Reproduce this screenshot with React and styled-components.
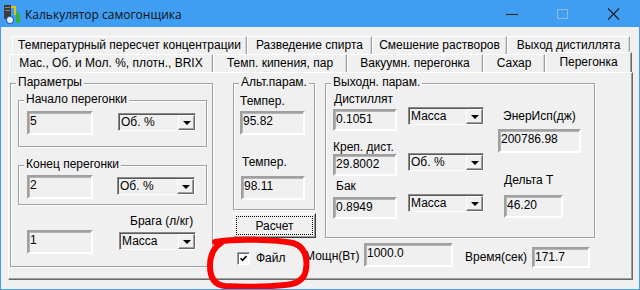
import React from "react";
import styled, { createGlobalStyle } from "styled-components";

const BLUE = "#409ef2";
const FACE = "#f0f0f0";

const GlobalStyle = createGlobalStyle`
  *, *::before, *::after { box-sizing: border-box; }
  html, body { margin: 0; padding: 0; background: ${FACE}; }
  body {
    font-family: "Liberation Sans", Arial, sans-serif;
    font-size: 12px;
    color: #000;
  }
`;

const Window = styled.div`
  position: relative;
  width: 640px;
  height: 290px;
  display: flex;
  flex-direction: column;
  border: 1px solid ${BLUE};
  border-top: none;
  overflow: hidden;
`;

const TitleBar = styled.header`
  flex: none;
  height: 27px;
  display: flex;
  align-items: center;
  background: ${BLUE};
  padding-left: 2px;
`;

const TitleText = styled.span`
  align-self: flex-start;
  margin-left: 4px;
  padding-top: 7px;
  font-family: "Open Sans", "Noto Sans", sans-serif;
  font-size: 12px;
  line-height: 16px;
  color: #111;
`;

const CaptionButtons = styled.div`
  margin-left: auto;
  display: flex;
  height: 100%;
`;

const CaptionButton = styled.div`
  width: 51px;
  height: 27px;
  display: flex;
  align-items: center;
  justify-content: center;
`;

const Body = styled.main`
  flex: 1;
  display: flex;
  flex-direction: column;
  align-items: flex-start;
  padding: 9px 0 0 7px;
  background: ${FACE};
`;

const TabRow = styled.div`
  display: flex;
  align-items: flex-end;
  margin-left: ${(p) => p.$indent}px;
  height: ${(p) => p.$h}px;
  margin-bottom: ${(p) => p.$mb || 0}px;
`;

const Tab = styled.div`
  flex: none;
  width: ${(p) => p.$w}px;
  height: ${(p) => (p.$selected ? 20 : 18)}px;
  padding-top: ${(p) => (p.$selected ? 2 : 1)}px;
  line-height: 14px;
  text-align: center;
  white-space: nowrap;
  border-top: 1px solid #fff;
  border-left: 1px solid #fff;
  border-right: 1px solid ${(p) => (p.$selected ? "#696969" : "#a0a0a0")};
  box-shadow: ${(p) => (p.$selected ? "inset -1px 0 0 #a0a0a0" : "inset -1px 0 0 #d6d6d6")};
  background: ${FACE};
`;

const Panel = styled.section`
  width: 625px;
  height: 208px;
  display: flex;
  align-items: flex-start;
  padding: 2px 0 0 1px;
  border-top: 1px solid #fff;
  border-left: 1px solid #fff;
  border-right: 1px solid #696969;
  border-bottom: 1px solid #696969;
  box-shadow: inset -1px -1px 0 #a0a0a0;
`;

const Fieldset = styled.fieldset`
  flex: none;
  margin: ${(p) => p.$mt || 0}px 0 0 ${(p) => p.$ml || 0}px;
  padding: 0;
  min-width: 0;
  width: ${(p) => p.$w}px;
  height: ${(p) => p.$h}px;
  border: 1px solid #a0a0a0;
  box-shadow: inset 1px 1px 0 #fff, 1px 1px 0 #fff;
`;

const Legend = styled.legend`
  margin-left: 5px;
  padding: 0 2px 3px;
  line-height: 14px;
  background: ${FACE};
  white-space: nowrap;
`;

const GroupBox = ({ title, w, h, mt, ml, children }) => (
  <Fieldset $w={w} $h={h} $mt={mt} $ml={ml}>
    <Legend>{title}</Legend>
    {children}
  </Fieldset>
);

const ParamsBody = styled.div`
  display: flex;
  flex-direction: column;
  padding: 0 5px 0 7px;
`;

const RangeBody = styled.div`
  display: flex;
  align-items: flex-start;
  padding-left: ${(p) => p.$pl}px;
`;

const MashRow = styled.div`
  display: flex;
  align-items: flex-start;
  padding-left: 9px;
`;

const Stack = styled.div`
  flex: none;
  display: flex;
  flex-direction: column;
  align-items: flex-start;
  width: ${(p) => (p.$w ? `${p.$w}px` : "auto")};
  margin-left: ${(p) => p.$ml || 0}px;
  margin-top: ${(p) => p.$mt || 0}px;
  padding-left: ${(p) => p.$pl || 0}px;
`;

const RightArea = styled.div`
  display: flex;
  flex-direction: column;
  margin-left: 20px;
`;

const TopRow = styled.div`
  display: flex;
  align-items: flex-start;
`;

const OutBody = styled.div`
  display: flex;
  align-items: flex-start;
  padding-left: 7px;
`;

const BottomRow = styled.div`
  display: flex;
  align-items: flex-start;
`;

const Label = styled.div`
  flex: none;
  line-height: 14px;
  white-space: nowrap;
  margin-top: ${(p) => p.$mt || 0}px;
  margin-left: ${(p) => p.$ml || 0}px;
  width: ${(p) => (p.$w ? `${p.$w}px` : "auto")};
`;

const Edit = styled.div`
  flex: none;
  width: ${(p) => p.$w}px;
  height: ${(p) => p.$h || 24}px;
  margin-top: ${(p) => p.$mt || 0}px;
  margin-left: ${(p) => p.$ml || 0}px;
  padding: 1px 1px 0;
  line-height: 14px;
  white-space: nowrap;
  overflow: hidden;
  background: ${FACE};
  border: 2px solid;
  border-color: #a0a0a0 #fff #fff #a0a0a0;
  box-shadow: inset 1px 1px 0 #b4b4b4;
`;

const ComboBox = styled.div`
  flex: none;
  display: flex;
  width: ${(p) => p.$w}px;
  height: 18px;
  margin-top: ${(p) => p.$mt || 0}px;
  margin-left: ${(p) => p.$ml || 0}px;
  background: ${FACE};
  border: 1px solid;
  border-color: #8a8a8a #fff #fff #8a8a8a;
  box-shadow: inset 1px 1px 0 #5a5a5a;
`;

const ComboValue = styled.div`
  flex: 1;
  padding: 1px 0 0 2px;
  line-height: 14px;
  white-space: nowrap;
`;

const DropButton = styled.div`
  flex: none;
  width: 17px;
  margin: 1px 0 0;
  display: flex;
  align-items: center;
  justify-content: center;
  border-top: 1px solid #fff;
  border-left: 1px solid #fff;
  border-right: 1px solid #696969;
  border-bottom: 1px solid #696969;
  box-shadow: inset -1px -1px 0 #a0a0a0;
  background: ${FACE};
`;

const Arrow = styled.span`
  width: 0;
  height: 0;
  border-left: 4px solid transparent;
  border-right: 4px solid transparent;
  border-top: 4px solid #000;
`;

const Combo = ({ value, w, mt, ml }) => (
  <ComboBox $w={w} $mt={mt} $ml={ml}>
    <ComboValue>{value}</ComboValue>
    <DropButton>
      <Arrow />
    </DropButton>
  </ComboBox>
);

const PushButton = styled.button`
  flex: none;
  display: flex;
  width: 83px;
  height: 25px;
  margin-top: 3px;
  padding: 2px;
  font: inherit;
  color: #000;
  background: ${FACE};
  border-top: 1px solid #fff;
  border-left: 1px solid #fff;
  border-right: 1px solid #3c3c3c;
  border-bottom: 1px solid #3c3c3c;
  box-shadow: inset -1px -1px 0 #a0a0a0;
`;

const FocusRing = styled.span`
  flex: 1;
  display: flex;
  align-items: center;
  justify-content: center;
  line-height: 14px;
  border: 1px dotted #000;
`;

const CheckField = styled.label`
  flex: none;
  display: flex;
  align-items: flex-start;
  width: 72px;
`;

const CheckBox = styled.span`
  flex: none;
  width: 13px;
  height: 13px;
  margin: 14px 0 0 4px;
  display: flex;
  align-items: center;
  justify-content: center;
  background: #fff;
  border: 1px solid;
  border-color: #a0a0a0 #fff #fff #a0a0a0;
  box-shadow: inset 1px 1px 0 #696969;
`;

const Annotation = styled.svg`
  position: absolute;
  left: 0;
  top: 0;
  pointer-events: none;
`;

const AppIcon = () => (
  <svg width="18" height="20" viewBox="0 0 18 20">
    <rect x="1" y="1" width="7" height="14" fill="#3b3b3b" />
    <rect x="2" y="3" width="5" height="1" fill="#8a8a8a" />
    <rect x="2" y="6" width="5" height="1" fill="#8a8a8a" />
    <rect x="8" y="2" width="5" height="2" fill="#e6c200" />
    <rect x="11" y="2" width="2" height="9" fill="#e6c200" />
    <circle cx="7" cy="16" r="3.5" fill="#eaf4ff" stroke="#2a64c8" strokeWidth="1.2" />
    <rect x="13" y="10" width="4" height="9" fill="#36b336" />
    <rect x="14" y="8" width="2" height="2" fill="#36b336" />
  </svg>
);

const TabsTop = [
  ["Температурный пересчет концентрации", 235],
  ["Разведение спирта", 125],
  ["Смешение растворов", 135],
  ["Выход дистиллята", 123],
];

const TabsBottom = [
  ["Мас., Об. и Мол. %, плотн., BRIX", 204],
  ["Темп. кипения, пар", 134],
  ["Вакуумн. перегонка", 136],
  ["Сахар", 62],
  ["Перегонка", 87, true],
];

export default function App() {
  return (
    <>
      <GlobalStyle />
      <Window>
        <TitleBar>
          <AppIcon />
          <TitleText>Калькулятор самогонщика</TitleText>
          <CaptionButtons>
            <CaptionButton>
              <svg width="12" height="12" viewBox="0 0 12 12">
                <rect x="0" y="6" width="12" height="1" fill="#1e1e1e" />
              </svg>
            </CaptionButton>
            <CaptionButton>
              <svg width="12" height="12" viewBox="0 0 12 12">
                <rect x="0.5" y="1.5" width="10" height="9" fill="none" stroke="#8fbde9" />
              </svg>
            </CaptionButton>
            <CaptionButton>
              <svg width="13" height="12" viewBox="0 0 13 12">
                <path d="M1 0.5 L12 11.5 M12 0.5 L1 11.5" stroke="#1e1e1e" strokeWidth="1.1" />
              </svg>
            </CaptionButton>
          </CaptionButtons>
        </TitleBar>

        <Body>
          <TabRow $indent={4} $h={18} $mb={-2}>
            {TabsTop.map(([t, w]) => (
              <Tab key={t} $w={w}>
                {t}
              </Tab>
            ))}
          </TabRow>
          <TabRow $indent={1} $h={20}>
            {TabsBottom.map(([t, w, sel]) => (
              <Tab key={t} $w={w} $selected={sel}>
                {t}
              </Tab>
            ))}
          </TabRow>

          <Panel>
            <GroupBox title="Параметры" w={203} h={192}>
              <ParamsBody>
                <GroupBox title="Начало перегонки" w={189} h={55}>
                  <RangeBody $pl={8}>
                    <Edit $w={66} $mt={2}>5</Edit>
                    <Combo value="Об. %" w={78} mt={4} ml={25} />
                  </RangeBody>
                </GroupBox>
                <GroupBox title="Конец перегонки" w={189} h={48} mt={10}>
                  <RangeBody $pl={8}>
                    <Edit $w={66} $mt={1}>2</Edit>
                    <Combo value="Об. %" w={78} mt={3} ml={24} />
                  </RangeBody>
                </GroupBox>
                <MashRow>
                  <Edit $w={66} $mt={25}>1</Edit>
                  <Stack $ml={26}>
                    <Label $mt={9} $ml={11}>Брага (л/кг)</Label>
                    <Combo value="Масса" w={77} mt={4} />
                  </Stack>
                </MashRow>
              </ParamsBody>
            </GroupBox>

            <RightArea>
              <TopRow>
                <Stack>
                  <GroupBox title="Альт.парам." w={82} h={135}>
                    <Stack $pl={6}>
                      <Label $mt={2}>Темпер.</Label>
                      <Edit $w={65} $mt={3}>95.82</Edit>
                      <Label $mt={20} $ml={2}>Темпер.</Label>
                      <Edit $w={64} $mt={7} $ml={1}>98.11</Edit>
                    </Stack>
                  </GroupBox>
                  <PushButton type="button">
                    <FocusRing>Расчет</FocusRing>
                  </PushButton>
                </Stack>

                <GroupBox title="Выходн. парам." w={270} h={163} ml={9}>
                  <OutBody>
                    <Stack $w={64}>
                      <Label $ml={1}>Дистиллят</Label>
                      <Edit $w={64} $h={22} $mt={3}>0.1051</Edit>
                      <Label $mt={9}>Креп. дист.</Label>
                      <Edit $w={64} $h={22}>29.8002</Edit>
                      <Label $mt={3} $ml={3}>Бак</Label>
                      <Edit $w={64} $h={22} $mt={4}>0.8949</Edit>
                    </Stack>
                    <Stack $w={76} $ml={11}>
                      <Combo value="Масса" w={76} mt={15} />
                      <Combo value="Об. %" w={76} mt={28} />
                      <Combo value="Масса" w={76} mt={23} />
                    </Stack>
                    <Stack $w={83} $ml={14}>
                      <Label $mt={17} $ml={5}>ЭнерИсп(дж)</Label>
                      <Edit $w={83} $mt={6}>200786.98</Edit>
                      <Label $mt={20} $ml={6}>Дельта Т</Label>
                      <Edit $w={59} $h={23} $mt={8} $ml={6}>46.20</Edit>
                    </Stack>
                  </OutBody>
                </GroupBox>
              </TopRow>

              <BottomRow>
                <CheckField>
                  <CheckBox>
                    <svg width="7" height="7" viewBox="0 0 7 7">
                      <path d="M0.5 3.2 L2.6 5.4 L6.5 1" fill="none" stroke="#000" strokeWidth="1.6" />
                    </svg>
                  </CheckBox>
                  <Label $mt={13} $ml={6}>Файл</Label>
                </CheckField>
                <Label $w={59} $mt={11}>Мощн(Вт)</Label>
                <Edit $w={89} $mt={5}>1000.0</Edit>
                <Label $w={67} $mt={12} $ml={12}>Время(сек)</Label>
                <Edit $w={58} $h={21} $mt={9}>171.7</Edit>
              </BottomRow>
            </RightArea>
          </Panel>
        </Body>

        <Annotation width="640" height="290" viewBox="0 0 640 290">
          <path
            d="M 214 242 C 238 238, 276 240, 292 243 C 303 246, 307 257, 305 269 C 304 279, 297 284, 284 285 C 262 287, 240 287, 224 286 C 213 285, 209 277, 209 266 C 209 255, 212 248, 220 243"
            fill="none"
            stroke="#ff0000"
            strokeWidth="6"
            strokeLinecap="round"
            strokeLinejoin="round"
          />
        </Annotation>
      </Window>
    </>
  );
}
